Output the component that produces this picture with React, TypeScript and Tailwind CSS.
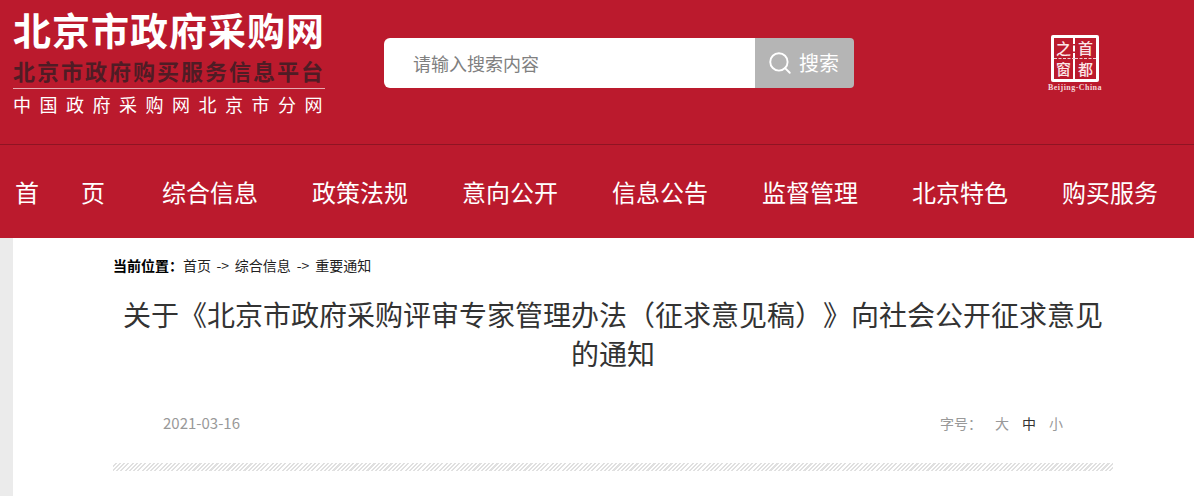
import { Search } from "lucide-react";

const cjk = "font-['Noto_Sans_CJK_SC','Microsoft_YaHei','Liberation_Sans',sans-serif]";
const navItems = ["综合信息", "政策法规", "意向公开", "信息公告", "监督管理", "北京特色", "购买服务"];

function CapitalLogo() {
  return (
    <div className="flex flex-col items-center w-[54px]">
      <div className="grid grid-cols-[1fr_1fr] grid-rows-2 w-[48px] h-[47px] border-[3px] border-white rounded-[2px] text-[#fbe6e8] text-[15px] font-medium leading-none">
        <div className="min-w-0 flex items-center justify-center border-r-2 border-b border-dashed border-r-white border-b-white/80">之</div>
        <div className="min-w-0 flex items-center justify-center border-b border-dashed border-b-white/80">首</div>
        <div className="min-w-0 flex items-center justify-center border-r-2 border-r-white">窗</div>
        <div className="min-w-0 flex items-center justify-center">都</div>
      </div>
      <div className="mt-[1px] text-[8px] leading-[10px] font-bold tracking-[0.45px] whitespace-nowrap text-[#f3d7da] font-['Liberation_Serif',serif]">Beijing-China</div>
    </div>
  );
}

export default function App() {
  return (
    <div className={`w-[1194px] h-[496px] overflow-hidden bg-white [text-spacing-trim:space-all] ${cjk}`}>
      <header className="bg-[#bb1a2d]">
        <div className="flex h-[144px]">
          <div className="ml-[13px] mt-[5px] w-[313px] flex flex-col">
            <div className="text-[38px] leading-[48px] font-bold text-white tracking-[1px] whitespace-nowrap">北京市政府采购网</div>
            <div className="mt-[3px] text-[22px] leading-[28px] font-bold text-[#4f1c25] tracking-[2px] whitespace-nowrap">北京市政府购买服务信息平台</div>
            <div className="mt-[4px] w-[312px] border-t border-[#e6a9b0] pt-[3px] text-[18px] leading-[25px] text-white tracking-[8.5px] whitespace-nowrap">中国政府采购网北京市分网</div>
          </div>
          <div className="ml-[58px] mt-[38px] flex h-[50px] w-[470px]">
            <div className="flex-1 flex items-center bg-white rounded-l-[6px] pl-[29px] text-[18px] text-[#808080]">请输入搜索内容</div>
            <div className="w-[99px] flex items-center justify-center gap-[6px] pr-[3px] bg-[#b5b5b5] rounded-r-[4px] text-white text-[20px]">
              <Search size={26} strokeWidth={1.75} />
              <span>搜索</span>
            </div>
          </div>
          <div className="ml-[194px] mt-[35px]">
            <CapitalLogo />
          </div>
        </div>
        <nav className="flex items-center h-[94px] border-t border-[#8f1423] pl-[15px] gap-[54px] text-white text-[24px]">
          <div className="w-[93px] pr-[3px] flex justify-between">
            <span>首</span>
            <span>页</span>
          </div>
          {navItems.map((item) => (
            <span key={item} className="whitespace-nowrap">{item}</span>
          ))}
        </nav>
      </header>
      <div className="flex h-[258px]">
        <div className="w-[13px] bg-[#ebebeb]" />
        <main className="ml-[100px] w-[1000px] flex flex-col">
          <div className="mt-[17px] flex text-[14px] leading-[20px] text-[#222] whitespace-nowrap">
            <span className="font-bold text-black">当前位置：</span>
            <span>首页</span>
            <span className="mx-[5.5px]">-&gt;</span>
            <span>综合信息</span>
            <span className="mx-[6px]">-&gt;</span>
            <span>重要通知</span>
          </div>
          <h1 className="mt-[20px] text-[28px] leading-[39px] font-normal text-[#333] text-center">
            关于《北京市政府采购评审专家管理办法（征求意见稿）》向社会公开征求意见的通知
          </h1>
          <div className="mt-[38px] flex items-center justify-between px-[50px] h-[24px]">
            <span className="text-[15px] text-[#999]">2021-03-16</span>
            <div className="flex gap-[13px] text-[14px] text-[#999]">
              <span>字号：</span>
              <span>大</span>
              <span className="text-[#333]">中</span>
              <span>小</span>
            </div>
          </div>
          <div className="mt-[28px] h-[8px] bg-[repeating-linear-gradient(135deg,#ffffff_0px,#ffffff_1.5px,#e0e0e0_1.5px,#e0e0e0_3px)]" />
        </main>
      </div>
    </div>
  );
}
